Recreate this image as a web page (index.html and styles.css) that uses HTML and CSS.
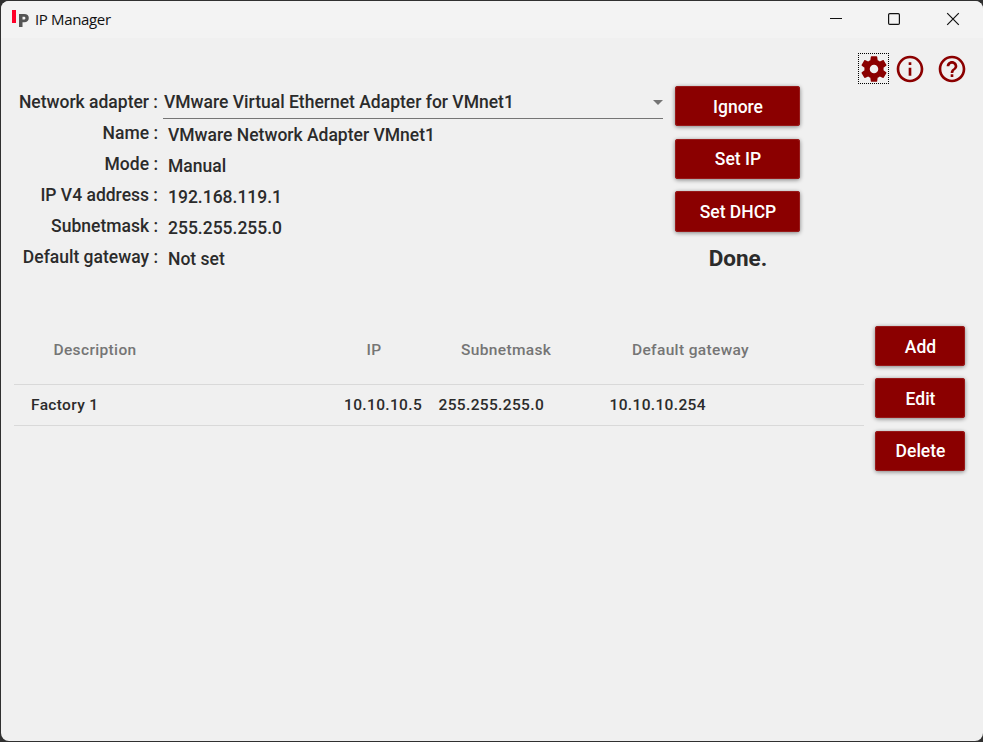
FILE: index.html
```html
<!DOCTYPE html>
<html lang="en">
<head>
<meta charset="utf-8">
<title>IP Manager</title>
<link rel="stylesheet" href="styles.css">
</head>
<body>
<div class="window">
  <header class="titlebar">
    <svg class="logo" width="18" height="18" viewBox="0 0 18 18"><path fill="#ff0028" d="M0 0h4v13H0z"/><path fill="#555" fill-rule="evenodd" d="M7 4h5.2c3 0 4.600 1.500 4.600 4s-1.600 4.200-4.600 4.200h-1.700V17H7zM10.500 6.700v2.900h1.200c1.100 0 1.700-.5 1.700-1.500s-.6-1.400-1.700-1.400z"/></svg>
    <span class="title">IP Manager</span>
    <svg class="controls" width="132" height="14" viewBox="0 0 132 14" fill="none" stroke="#111" stroke-width="1.200"><path d="M0 6.500h12"/><rect x="58.600" y="1.600" width="10.800" height="10.800" rx="1.200"/><path d="M117.200 1.200l11.600 11.600M128.800 1.200l-11.600 11.600"/></svg>
  </header>
  <nav class="tools">
    <button class="tool focused" aria-label="Settings"><svg width="32" height="32" viewBox="0 0 24 24"><path d="M19.140 12.940c.040-.3.060-.610.060-.940s-.020-.640-.070-.940l2.030-1.580c.180-.140.230-.410.120-.610l-1.920-3.320c-.120-.220-.370-.290-.590-.220l-2.390.960c-.5-.380-1.030-.7-1.620-.940l-.360-2.540c-.040-.240-.240-.410-.480-.410h-3.840c-.240 0-.430.170-.470.410l-.360 2.540c-.590.240-1.130.570-1.620.940l-2.390-.960c-.220-.080-.470 0-.590.220L2.740 8.870c-.120.210-.080.470.120.610l2.030 1.580c-.050.300-.090.630-.090.940s.020.640.070.940l-2.030 1.580c-.180.140-.230.410-.120.610l1.920 3.320c.120.220.370.290.590.220l2.390-.960c.5.380 1.030.7 1.620.940l.360 2.540c.050.240.240.410.480.410h3.840c.240 0 .440-.170.470-.410l.360-2.540c.590-.240 1.130-.560 1.620-.940l2.390.960c.220.080.470 0 .590-.220l1.920-3.320c.120-.220.070-.470-.120-.610zM12 15.200a3.200 3.200 0 1 1 0-6.400 3.200 3.200 0 0 1 0 6.400z"/></svg></button>
    <button class="tool" aria-label="Info"><svg width="32" height="32" viewBox="0 0 24 24"><path d="M11 7h2v2h-2zm0 4h2v6h-2zm1-9C6.480 2 2 6.480 2 12s4.480 10 10 10 10-4.480 10-10S17.520 2 12 2zm0 18c-4.410 0-8-3.590-8-8s3.590-8 8-8 8 3.590 8 8-3.590 8-8 8z"/></svg></button>
    <button class="tool" aria-label="Help"><svg width="32" height="32" viewBox="0 0 24 24"><path d="M11 18h2v-2h-2zm1-16C6.480 2 2 6.480 2 12s4.480 10 10 10 10-4.480 10-10S17.520 2 12 2zm0 18c-4.410 0-8-3.590-8-8s3.590-8 8-8 8 3.590 8 8-3.590 8-8 8zm0-14c-2.210 0-4 1.790-4 4h2c0-1.100.9-2 2-2s2 .9 2 2c0 2-3 1.750-3 5h2c0-2.250 3-2.500 3-5 0-2.210-1.790-4-4-4z"/></svg></button>
  </nav>
  <section class="adapter">
    <div class="labels">
      <span>Network adapter :</span><span>Name :</span><span>Mode :</span><span>IP V4 address :</span><span>Subnetmask :</span><span>Default gateway :</span>
    </div>
    <div class="values">
      <div class="select"><span>VMware Virtual Ethernet Adapter for VMnet1</span><svg width="10" height="5" viewBox="0 0 10 5"><path d="M0 0h10L5 5z" fill="#757575"/></svg></div>
      <span class="value">VMware Network Adapter VMnet1</span><span class="value">Manual</span><span class="value">192.168.119.1</span><span class="value">255.255.255.0</span><span class="value">Not set</span>
    </div>
    <div class="actions">
      <button class="btn">Ignore</button><button class="btn">Set IP</button><button class="btn">Set DHCP</button>
      <span class="status">Done.</span>
    </div>
  </section>
  <section class="presets">
    <table class="grid">
      <colgroup><col class="c1"><col class="c2"><col class="c3"><col class="c4"></colgroup>
      <thead><tr><th>Description</th><th>IP</th><th>Subnetmask</th><th>Default gateway</th></tr></thead>
      <tbody><tr><td>Factory 1</td><td>10.10.10.5</td><td>255.255.255.0</td><td>10.10.10.254</td></tr></tbody>
    </table>
    <div class="side">
      <button class="btn">Add</button><button class="btn">Edit</button><button class="btn">Delete</button>
    </div>
  </section>
</div>
</body>
</html>
```
FILE: styles.css
```css
* { box-sizing: border-box; }
body { margin: 0; background: #303030; font-family: Roboto, sans-serif; color: #2b2b2b; }
button { font: inherit; border: 0; padding: 0; }
.window { margin: 1px 0 1px 1px; height: 740px; background: #f0f0f0; border-radius: 8px; overflow: hidden; }
.titlebar { display: flex; height: 37px; background: #f3f3f3; padding: 0 21px 2px 11px; align-items: center; }
.logo { margin-top: 0; }
.title { font: 15px/20px "Open Sans", sans-serif; letter-spacing: -0.350px; color: #111; margin-left: 5px; }
.controls { margin-left: auto; }
.tools { display: flex; justify-content: flex-end; height: 48px; padding: 15px 15px 0 0; }
.tool { display: flex; align-items: center; justify-content: center; width: 32px; height: 32px; background: none; fill: #8b0000; margin-left: 10.500px; }
.tool.focused { width: 31px; height: 31px; outline: 1px dotted #000; outline-offset: -1px; margin-right: -6px; }
.tool svg { flex: none; margin-top: -1px; }
.tool.focused svg { margin: 0; }
.adapter { display: flex; height: 240px; font-size: 17.500px; font-weight: 500; }
.labels { display: flex; flex-direction: column; width: 157px; padding-top: 1px; text-align: right; line-height: 31px; }
.values { width: 500px; margin-left: 5px; line-height: 31px; }
.select { display: flex; align-items: center; justify-content: space-between; height: 33px; border-bottom: 1px solid #757575; padding-left: 1px; margin-bottom: 1px; }
.value { display: block; padding-left: 5px; }
.actions { display: flex; flex-direction: column; width: 125px; margin-left: 12px; gap: 12.400px; }
.btn { display: block; height: 40px; color: #fff; background: #8b0000; border-radius: 3px; padding: 1px 0 0 1px; font-size: 17.500px; font-weight: 500; box-shadow: inset 0 0 0 1px #981919, 0 1px 4px #0007; flex: none; }
.actions .btn { height: 40.250px; }
.status { font-size: 22.500px; line-height: 28px; padding-left: 1px; font-weight: 700; text-align: center; }
.presets { display: flex; }
.grid { width: 850px; height: 99px; margin-left: 13px; table-layout: fixed; border-collapse: collapse; font-size: 15.500px; font-weight: 500; letter-spacing: 0.350px; text-align: left; }
.c1 { width: 313px; }
.c2 { width: 94.500px; }
.c3 { width: 171px; }
.grid th { height: 58px; padding: 0 0 9px 39.500px; font-weight: 500; color: #757575; border-bottom: 1px solid #d9d9d9; }
.grid td { height: 41px; padding: 0 0 0 17px; border-bottom: 1px solid #d9d9d9; white-space: nowrap; }
.side { display: flex; flex-direction: column; width: 90px; margin-left: 11px; gap: 12.400px; }
```
